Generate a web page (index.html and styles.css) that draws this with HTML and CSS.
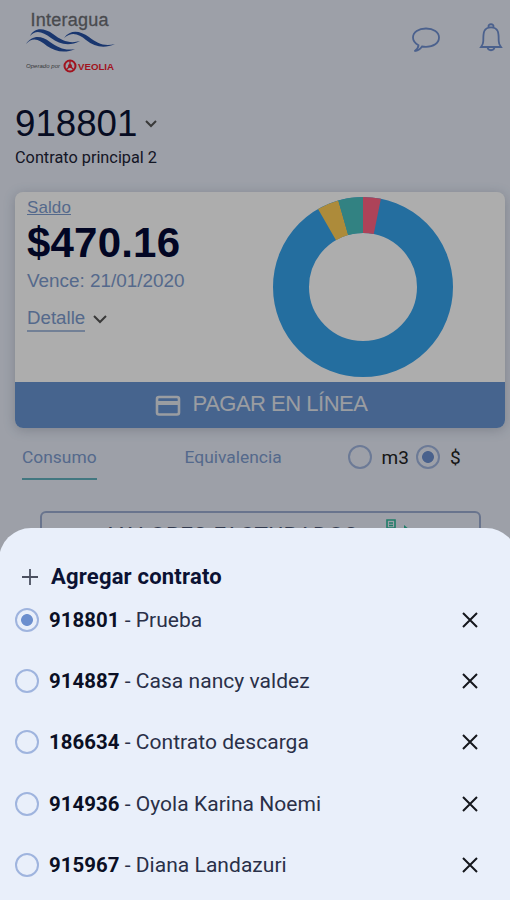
FILE: index.html
```html
<!DOCTYPE html>
<html lang="es">
<head>
    <meta charset="UTF-8">
    <meta name="viewport" content="width=device-width, initial-scale=1.0">
    <title>Interagua</title>
    <link rel="stylesheet" href="styles.css">
</head>
<body>
    <div class="page">
        <header class="header">
            <svg class="logo" width="92" height="70" viewBox="0 0 92 70">
                <text class="logo-name" x="4.500" y="18" textLength="78">Interagua</text>
                <g fill="#2650a3">
                    <path d="M4 28 C8 20 17 19 27 26 C36 33 44 36 54 33 C43 39 33 36 25 30 C17 24 10 21 4 28Z"/>
                    <path d="M0 36 C6 27 15 27 24 34 C33 40 39 43 49 41 C38 46 29 43 21 38 C14 32 7 28 0 36Z"/>
                    <path d="M38 30 C45 21 54 23 63 29 C71 35 78 39 89 36 C78 41 69 39 60 32 C53 26 46 23 38 30Z"/>
                </g>
                <text class="logo-by" x="0" y="60" textLength="34">Operado por</text>
                <circle cx="44" cy="58" r="5.500" fill="none" stroke="#ee1c2e" stroke-width="2"/>
                <path d="M44 53v5M40 62l4-4 4 4" fill="none" stroke="#ee1c2e" stroke-width="1.300"/>
                <circle cx="44" cy="58" r="2" fill="#ee1c2e"/>
                <text class="logo-brand" x="52" y="61.500" textLength="36" lengthAdjust="spacingAndGlyphs">VEOLIA</text>
            </svg>
            <div class="header-icons">
                <svg width="30" height="28" viewBox="0 0 30 28">
                    <path d="M7.500 20.200 C4.200 18.400 2 15.600 2 12.500 C2 7 7.500 3.500 15 3.500 S28 7 28 12.500 S22.500 21.800 15 21.800 C13.500 21.800 12.200 21.700 11 21.500 C9 24.500 6.500 25.900 3.500 26.200 C6 24.500 7.300 22.800 7.500 20.200Z"/>
                </svg>
                <svg width="24" height="30" viewBox="0 0 24 30">
                    <path d="M9.500 5.300 C8.800 1.200 15.200 1.200 14.500 5.300 M4.300 19 C4.300 12 4 5.300 12 5.300 S19.700 12 19.700 19 C19.700 21.500 20.500 23 22 25 H2 C3.500 23 4.300 21.500 4.300 19Z M8.500 25 C8.800 29.300 15.200 29.300 15.500 25"/>
                </svg>
            </div>
        </header>

        <div class="contract">
            <h1>918801
                <svg width="14" height="9" viewBox="0 0 14 9"><path d="M2 2l5 5 5-5"/></svg>
            </h1>
            <p>Contrato principal 2</p>
        </div>

        <section class="card">
            <div class="card-body">
                <div class="balance">
                    <span class="balance-label">Saldo</span>
                    <span class="balance-amount">$470.16</span>
                    <span class="balance-due">Vence: 21/01/2020</span>
                    <span class="balance-detail">
                        <span>Detalle</span>
                        <svg width="16" height="11" viewBox="0 0 16 11"><path d="M2 2l6 6 6-6"/></svg>
                    </span>
                </div>
                <svg class="donut" width="180" height="180" viewBox="0 0 180 180">
                    <g transform="rotate(-90 90 90)" fill="none" stroke-width="36">
                        <circle cx="90" cy="90" r="72" stroke="#36a2eb"/>
                        <circle cx="90" cy="90" r="72" stroke="#ff6384" pathLength="360" stroke-dasharray="11.500 348.500"/>
                        <circle cx="90" cy="90" r="72" stroke="#ffcd56" pathLength="360" stroke-dasharray="14 346" stroke-dashoffset="-330"/>
                        <circle cx="90" cy="90" r="72" stroke="#4bc0c0" pathLength="360" stroke-dasharray="16 344" stroke-dashoffset="-344"/>
                    </g>
                </svg>
            </div>
            <button class="pay-btn">
                <svg width="26" height="22" viewBox="0 0 26 22">
                    <rect x="2" y="2" width="22" height="17.500" rx="2"/>
                    <path d="M2 8h22" stroke-width="4"/>
                </svg>
                <span>PAGAR EN LÍNEA</span>
            </button>
        </section>

        <nav class="tabs">
            <span class="tab active">Consumo</span>
            <span class="tab">Equivalencia</span>
            <span class="units">
                <span class="radio"></span>
                <span class="unit">m3</span>
                <span class="radio checked"></span>
                <span class="unit">$</span>
            </span>
        </nav>

        <div class="billed">
            <span>VALORES FACTURADOS</span>
            <svg width="28" height="24" viewBox="0 0 28 24">
                <path d="M3 1h8v8H3zM5 4h4M5 6.500h4" fill="none" stroke="#2fb89a" stroke-width="1.600"/>
                <path d="M20 6l6 5-6 5z" fill="#2fb89a"/>
            </svg>
        </div>
    </div>

    <div class="backdrop"></div>

    <div class="sheet">
        <div class="add">
            <svg width="16" height="16" viewBox="0 0 16 16"><path d="M8 0v16M0 8h16"/></svg>
            <span>Agregar contrato</span>
        </div>
        <ul class="contracts">
            <li>
                <span class="radio checked"></span>
                <span class="name"><b>918801</b> - Prueba</span>
                <svg class="close" width="18" height="18" viewBox="0 0 18 18"><path d="M2 2l14 14M16 2L2 16"/></svg>
            </li>
            <li>
                <span class="radio"></span>
                <span class="name"><b>914887</b> - Casa nancy valdez</span>
                <svg class="close" width="18" height="18" viewBox="0 0 18 18"><path d="M2 2l14 14M16 2L2 16"/></svg>
            </li>
            <li>
                <span class="radio"></span>
                <span class="name"><b>186634</b> - Contrato descarga</span>
                <svg class="close" width="18" height="18" viewBox="0 0 18 18"><path d="M2 2l14 14M16 2L2 16"/></svg>
            </li>
            <li>
                <span class="radio"></span>
                <span class="name"><b>914936</b> - Oyola Karina Noemi</span>
                <svg class="close" width="18" height="18" viewBox="0 0 18 18"><path d="M2 2l14 14M16 2L2 16"/></svg>
            </li>
            <li>
                <span class="radio"></span>
                <span class="name"><b>915967</b> - Diana Landazuri</span>
                <svg class="close" width="18" height="18" viewBox="0 0 18 18"><path d="M2 2l14 14M16 2L2 16"/></svg>
            </li>
        </ul>
    </div>
</body>
</html>
```

FILE: styles.css
```css
* {
    margin: 0;
    padding: 0;
    box-sizing: border-box;
}

body {
    position: relative;
    height: 900px;
    overflow: hidden;
    font-family: Roboto, "Liberation Sans", sans-serif;
    background: #e7ecf8;
    color: #0b1233;
}

/* Header */
.header {
    display: flex;
    justify-content: space-between;
    height: 104px;
    padding: 8px 7px 0 26px;
}

.logo-name {
    font: 18px "Liberation Sans", sans-serif;
    fill: #6c6e74;
    stroke: #6c6e74;
    stroke-width: 0.3px;
}

.logo-by {
    font: italic 6px "Liberation Sans", sans-serif;
    fill: #555;
}

.logo-brand {
    font: bold 9px "Liberation Sans", sans-serif;
    fill: #ee1c2e;
}

.header-icons {
    display: flex;
    gap: 38px;
    padding-top: 17px;
}

.header-icons svg {
    fill: none;
    stroke: #6f8fd0;
    stroke-width: 1.8;
}

.header-icons svg:last-child {
    margin-top: -3px;
}

/* Contract */
.contract {
    height: 88px;
    padding-left: 15px;
    font-family: "Liberation Sans", sans-serif;
}

.contract h1 {
    display: flex;
    align-items: center;
    gap: 7px;
    height: 39px;
    font-size: 36.7px;
    font-weight: 400;
    line-height: 39px;
}

.contract svg,
.balance-detail svg {
    fill: none;
    stroke: #555;
    stroke-width: 2;
}

.contract p {
    font-family: Roboto, sans-serif;
    font-size: 16.3px;
    line-height: 29px;
    color: #1c2236;
}

/* Card */
.card {
    height: 236px;
    margin: 0 5px 0 15px;
    border-radius: 8px;
    background: #fff;
    box-shadow: 0 2px 12px rgba(60, 70, 90, 0.25);
    overflow: hidden;
}

.card-body {
    display: flex;
    justify-content: space-between;
    height: 190px;
    padding: 5px 52px 0 12px;
    font-family: "Liberation Sans", sans-serif;
}

.balance {
    display: flex;
    flex-direction: column;
    align-items: flex-start;
    padding-top: 1px;
    color: #7d9bce;
    font-size: 18px;
}

.balance-label {
    line-height: 20px;
    font-size: 17px;
    letter-spacing: 0.1px;
    text-decoration: underline;
}

.balance-amount {
    font-size: 42px;
    font-weight: 700;
    line-height: 50px;
    letter-spacing: 0.2px;
    color: #040a35;
}

.balance-due {
    font-size: 18.9px;
    line-height: 26px;
}

.balance-detail {
    display: flex;
    align-items: center;
    gap: 7px;
    margin-top: 12px;
}

.balance-detail span {
    font-size: 18.7px;
    line-height: 24px;
    border-bottom: 2px solid #a9bddd;
}

.pay-btn {
    display: flex;
    align-items: center;
    justify-content: center;
    gap: 12px;
    width: 100%;
    height: 46px;
    padding: 0 0 2px 2px;
    border: none;
    background: #6794d2;
    color: #e4e7ee;
    font-family: "Liberation Sans", sans-serif;
    font-size: 22px;
    letter-spacing: -0.5px;
}

.pay-btn svg {
    margin-top: 4px;
    fill: none;
    stroke: #e4e7ee;
    stroke-width: 2.6;
}

/* Tabs */
.tabs {
    display: flex;
    align-items: flex-start;
    height: 83px;
    padding: 9px 0 0 22px;
}

.tab {
    height: 43px;
    margin-right: 88px;
    font-size: 17.4px;
    line-height: 40px;
    color: #7d9bce;
}

.tab.active {
    border-bottom: 2px solid #62b0bd;
}

.units {
    display: flex;
    align-items: center;
    height: 40px;
    margin-left: -22px;
}

.unit {
    margin: 0 7px 0 10px;
    font-size: 19px;
    color: #222;
}

.radio {
    flex: none;
    width: 24px;
    height: 24px;
    border: 2px solid #9fb4de;
    border-radius: 50%;
}

.radio.checked {
    background: radial-gradient(circle, #6c8fce 5.5px, transparent 6.3px);
}

.billed {
    display: flex;
    justify-content: center;
    gap: 26px;
    height: 60px;
    margin: 0 29px 0 40px;
    padding: 7px 0 0;
    border: 2px solid #9babd0;
    border-radius: 6px;
    font-size: 22.5px;
    line-height: 30px;
    letter-spacing: 0.5px;
    color: #4c5875;
}

.billed svg {
    margin-top: -1px;
}

/* Bottom sheet */
.backdrop {
    position: absolute;
    inset: 0;
    background: rgba(0, 0, 0, 0.32);
}

.sheet {
    position: absolute;
    top: 528px;
    right: -8px;
    bottom: 0;
    left: -1px;
    padding: 33px 39px 0 16px;
    border-radius: 32px 32px 0 0;
    background: #e9effa;
}

.add {
    display: flex;
    align-items: center;
    gap: 13px;
    height: 31px;
    padding-left: 7px;
    font-size: 22px;
    font-weight: 700;
    letter-spacing: 0.2px;
}

.add svg {
    fill: none;
    stroke: #4b5060;
    stroke-width: 1.8;
}

.contracts {
    list-style: none;
}

.contracts li {
    display: flex;
    align-items: center;
    height: 61.2px;
}

.contracts li:first-child {
    margin-top: -2.6px;
}

.name {
    flex: 1;
    margin-left: 10px;
    font-size: 21px;
    letter-spacing: 0.04px;
    color: #2a3048;
}

.name b {
    font-size: 20.4px;
    font-weight: 700;
    color: #0b0f24;
}

.close {
    fill: none;
    stroke: #15171c;
    stroke-width: 2;
}
```
